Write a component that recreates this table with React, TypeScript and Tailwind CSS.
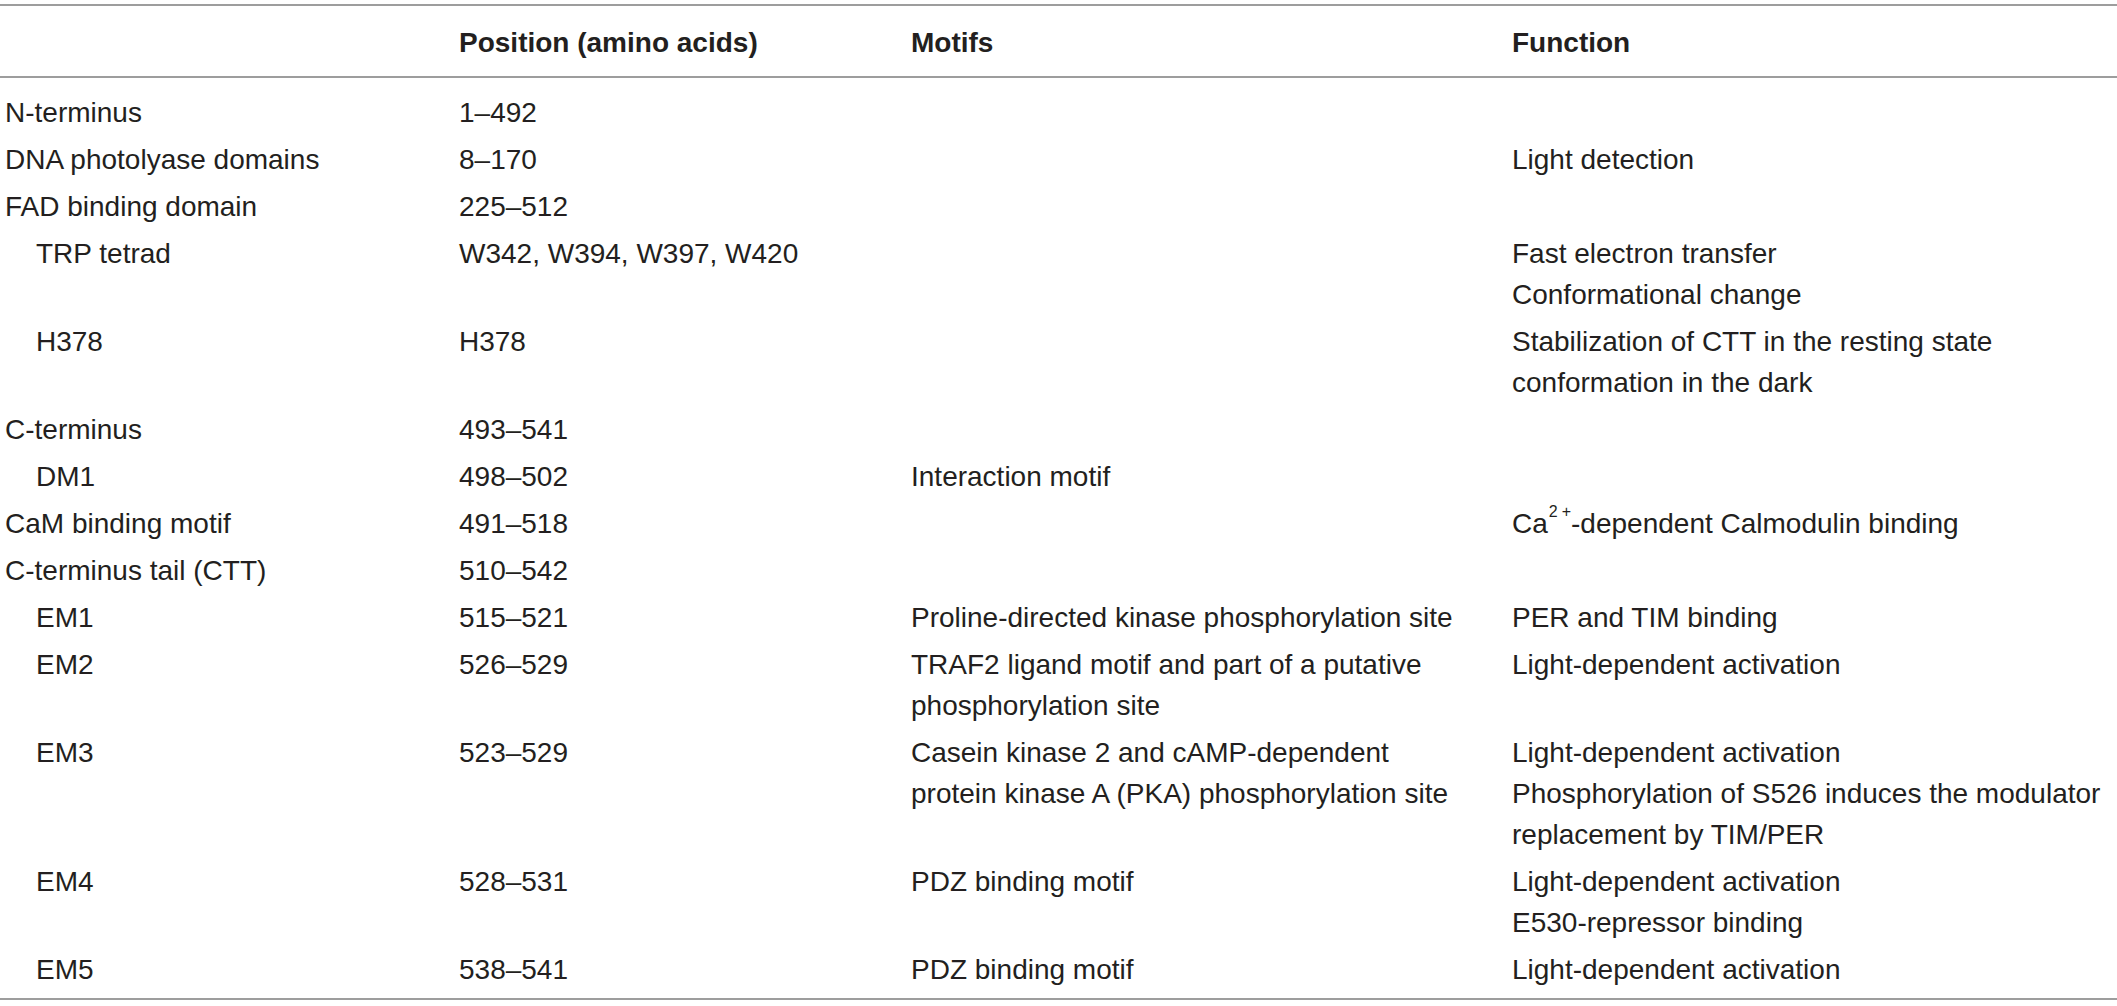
import { ReactNode } from "react";

type Row = {
  name: string;
  sub?: boolean;
  position: string;
  motifs?: ReactNode[];
  functions?: ReactNode[];
};

const rows: Row[] = [
  { name: "N-terminus", position: "1–492" },
  { name: "DNA photolyase domains", position: "8–170", functions: ["Light detection"] },
  { name: "FAD binding domain", position: "225–512" },
  {
    name: "TRP tetrad",
    sub: true,
    position: "W342, W394, W397, W420",
    functions: ["Fast electron transfer", "Conformational change"],
  },
  {
    name: "H378",
    sub: true,
    position: "H378",
    functions: ["Stabilization of CTT in the resting state", "conformation in the dark"],
  },
  { name: "C-terminus", position: "493–541" },
  { name: "DM1", sub: true, position: "498–502", motifs: ["Interaction motif"] },
  {
    name: "CaM binding motif",
    position: "491–518",
    functions: [
      <>
        Ca
        <sup className="text-[16px] leading-none align-[8px] ml-[1px]">
          2<span className="ml-[4px]">+</span>
        </sup>
        -dependent Calmodulin binding
      </>,
    ],
  },
  { name: "C-terminus tail (CTT)", position: "510–542" },
  {
    name: "EM1",
    sub: true,
    position: "515–521",
    motifs: ["Proline-directed kinase phosphorylation site"],
    functions: ["PER and TIM binding"],
  },
  {
    name: "EM2",
    sub: true,
    position: "526–529",
    motifs: ["TRAF2 ligand motif and part of a putative", "phosphorylation site"],
    functions: ["Light-dependent activation"],
  },
  {
    name: "EM3",
    sub: true,
    position: "523–529",
    motifs: ["Casein kinase 2 and cAMP-dependent", "protein kinase A (PKA) phosphorylation site"],
    functions: [
      "Light-dependent activation",
      "Phosphorylation of S526 induces the modulator",
      "replacement by TIM/PER",
    ],
  },
  {
    name: "EM4",
    sub: true,
    position: "528–531",
    motifs: ["PDZ binding motif"],
    functions: ["Light-dependent activation", "E530-repressor binding"],
  },
  {
    name: "EM5",
    sub: true,
    position: "538–541",
    motifs: ["PDZ binding motif"],
    functions: ["Light-dependent activation"],
  },
];

const cols = "grid grid-cols-[454px_452px_601px_1fr] pl-[5px]";

function Lines({ items }: { items?: ReactNode[] }) {
  return (
    <div className="whitespace-nowrap">
      {(items ?? []).map((t, i) => (
        <div key={i}>{t}</div>
      ))}
    </div>
  );
}

export default function App() {
  return (
    <div className="min-h-screen w-full bg-white pt-[4px] text-[28px] leading-[41px] text-[#231f20] font-['Liberation_Sans',Arial,sans-serif]">
      {/* Header */}
      <div className={`${cols} border-y-2 border-[#9d9d9d] pt-[16px] pb-[13px] font-bold`}>
        <div />
        <div>Position (amino acids)</div>
        <div>Motifs</div>
        <div>Function</div>
      </div>

      {/* Body */}
      <div className="border-b-2 border-[#9d9d9d] pt-[11px] pb-[5px]">
        {rows.map((r) => (
          <div key={r.name} className={`${cols} py-[3px]`}>
            <div className={r.sub ? "pl-[31px]" : ""}>{r.name}</div>
            <div>{r.position}</div>
            <Lines items={r.motifs} />
            <Lines items={r.functions} />
          </div>
        ))}
      </div>
    </div>
  );
}
